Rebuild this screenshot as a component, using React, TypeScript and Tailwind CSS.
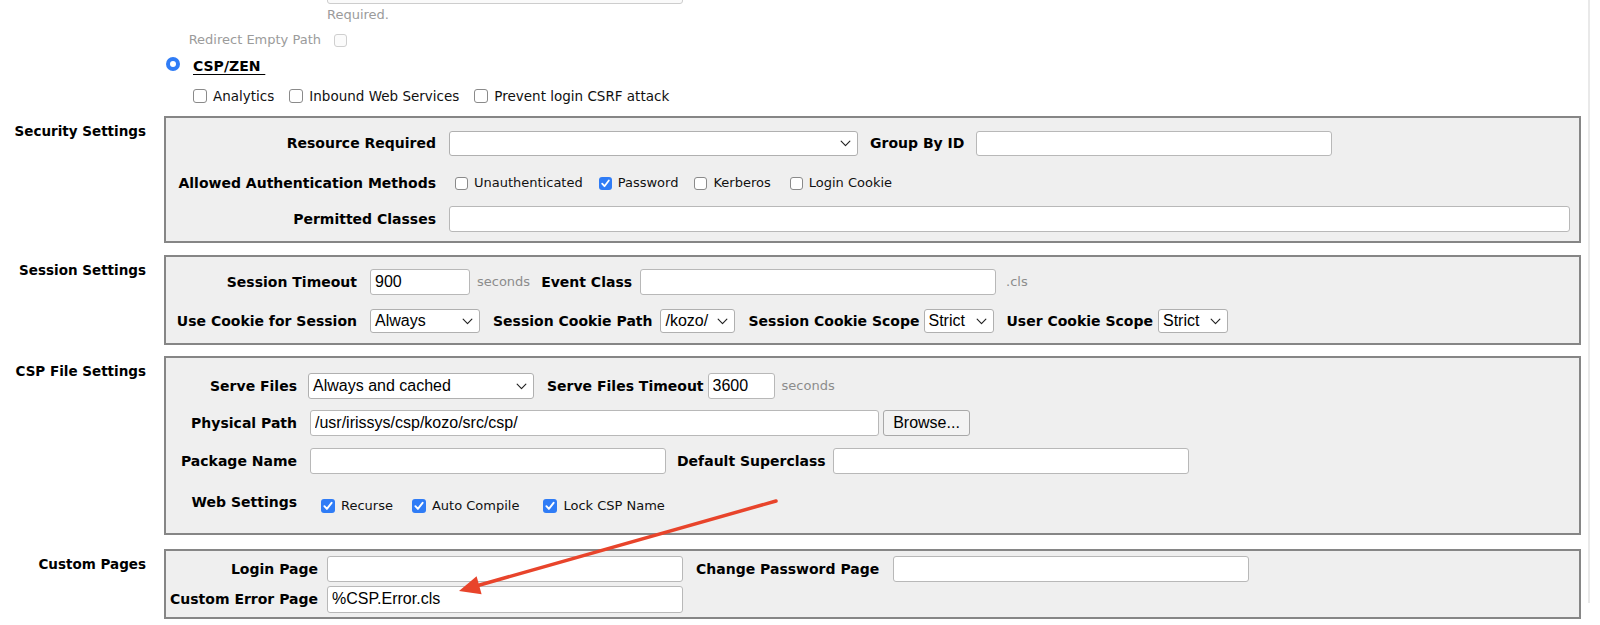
import React from "react";

const INPUT_FONT = "font-['Liberation_Sans',Arial,sans-serif]";

function Check({ checked = false, disabled = false, big = false }: { checked?: boolean; disabled?: boolean; big?: boolean }) {
  const size = big ? "w-[14px] h-[14px]" : "w-[13px] h-[13px]";
  if (checked) {
    return (
      <span className={`${size} shrink-0 rounded-[3px] bg-[#2f7cf6] flex items-center justify-center`}>
        <svg viewBox="0 0 14 14" className="w-full h-full">
          <path d="M3.4 7.2 L5.9 9.9 L10.6 3.8" fill="none" stroke="#ffffff" strokeWidth="1.9" strokeLinecap="round" strokeLinejoin="round" />
        </svg>
      </span>
    );
  }
  return (
    <span
      className={`${size} shrink-0 rounded-[3px] border ${disabled ? "border-[#cfcfcf] bg-[#fbfbfb]" : "border-[#8a8a8a] bg-white"}`}
    />
  );
}

function CheckItem({ label, checked = false, big = false, lg = false }: { label: string; checked?: boolean; big?: boolean; lg?: boolean }) {
  return (
    <span className="flex items-center gap-[6px]">
      <Check checked={checked} big={big || lg} />
      <span className={`${lg ? "text-[13.5px]" : "text-[13px]"} leading-[16px] text-[#111] whitespace-nowrap`}>{label}</span>
    </span>
  );
}

function Inp({ w, value = "", h = "h-[26px]" }: { w: string; value?: string; h?: string }) {
  return (
    <input
      readOnly
      value={value}
      className={`${w} ${h} shrink-0 border border-[#b8b8b8] rounded-[3px] bg-white px-[4px] text-[16px] ${INPUT_FONT} text-black outline-none`}
    />
  );
}

function Sel({ w, value = "", h = "h-[26px]" }: { w: string; value?: string; h?: string }) {
  return (
    <div
      className={`${w} ${h} shrink-0 flex items-center justify-between border border-[#b0b0b0] rounded-[3px] bg-white pl-[4px] pr-[6px] text-[16px] ${INPUT_FONT} text-black`}
    >
      <span className="whitespace-nowrap leading-none">{value}</span>
      <svg viewBox="0 0 12 8" className="w-[11px] h-[7px] shrink-0">
        <path d="M1 1.2 L6 6.4 L11 1.2" fill="none" stroke="#222" strokeWidth="1.3" strokeLinecap="round" strokeLinejoin="round" />
      </svg>
    </div>
  );
}

function L({ children, cls = "" }: { children: React.ReactNode; cls?: string }) {
  return <span className={`font-bold text-[14px] leading-[18px] whitespace-nowrap text-black ${cls}`}>{children}</span>;
}

function Gray({ children, cls = "" }: { children: React.ReactNode; cls?: string }) {
  return <span className={`text-[13px] text-[#8c8c8c] whitespace-nowrap ${cls}`}>{children}</span>;
}

function Section({ label, mt, children }: { label: string; mt: string; children: React.ReactNode }) {
  return (
    <div className={`flex ${mt}`}>
      <div className="w-[146px] shrink-0 text-right font-bold text-[13.5px] leading-[20px] pt-[5px] whitespace-nowrap">{label}</div>
      <div className="ml-[18px] w-[1417px] shrink-0">{children}</div>
    </div>
  );
}

export default function App() {
  return (
    <div className="relative w-[1600px] h-[625px] overflow-hidden bg-white font-['DejaVu_Sans',sans-serif] text-black">
      <div className="w-[1590px] h-full border-r-2 border-[#e9e9e9]">
        {/* Top area */}
        <div className="pl-[327px]">
          <div className="w-[356px] h-[26px] -mt-[22px] border border-[#cdcdcd] rounded-[3px] bg-[#fafafa]" />
        </div>
        <div className="pl-[327px] h-[22px] flex items-center text-[13px] text-[#9b9b9b]">Required.</div>
        <div className="h-[28px] flex items-center">
          <div className="w-[321px] text-right text-[13px] text-[#9b9b9b] whitespace-nowrap">Redirect Empty Path</div>
          <div className="ml-[13px] flex">
            <Check disabled />
          </div>
        </div>
        <div className="h-[22px] flex items-center pl-[166px] pt-[2px]">
          <span className="w-[14px] h-[14px] mb-[5px] rounded-full bg-[#2f7cf6] flex items-center justify-center shrink-0">
            <span className="w-[6px] h-[6px] rounded-full bg-white" />
          </span>
          <span className="ml-[13px] font-bold text-[14px] underline underline-offset-[3px] whitespace-pre">CSP/ZEN </span>
        </div>
        <div className="h-[38px] flex items-center pl-[193px] pt-[2px] gap-[15px]">
          <CheckItem label="Analytics" lg />
          <CheckItem label="Inbound Web Services" lg />
          <CheckItem label="Prevent login CSRF attack" lg />
        </div>

        {/* Security Settings */}
        <Section label="Security Settings" mt="mt-[2px]">
          <div className="border-2 border-[#868686] bg-[#efefef] pl-[9px] pt-[8px] pb-[9px]">
            <div className="flex items-center h-[34px]">
              <div className="w-[261px] shrink-0 text-right"><L>Resource Required</L></div>
              <div className="ml-[13px] flex"><Sel w="w-[409px]" h="h-[25px]" /></div>
              <L cls="ml-[12px]">Group By ID</L>
              <div className="ml-[12px] flex"><Inp w="w-[356px]" h="h-[25px]" /></div>
            </div>
            <div className="flex items-center h-[46px]">
              <div className="w-[261px] shrink-0 text-right"><L>Allowed Authentication Methods</L></div>
              <div className="ml-[19px] flex items-center gap-[16px]">
                <CheckItem label="Unauthenticated" />
                <CheckItem label="Password" checked />
                <CheckItem label="Kerberos" />
                <span className="ml-[3px] flex"><CheckItem label="Login Cookie" /></span>
              </div>
            </div>
            <div className="flex items-center h-[26px]">
              <div className="w-[261px] shrink-0 text-right"><L>Permitted Classes</L></div>
              <div className="ml-[13px] flex"><Inp w="w-[1121px]" /></div>
            </div>
          </div>
        </Section>

        {/* Session Settings */}
        <Section label="Session Settings" mt="mt-[12px]">
          <div className="border-2 border-[#868686] bg-[#efefef] pl-[9px] pt-[8px]">
            <div className="flex items-center h-[34px]">
              <div className="w-[182px] shrink-0 text-right"><L>Session Timeout</L></div>
              <div className="ml-[13px] flex"><Inp w="w-[100px]" value="900" /></div>
              <Gray cls="ml-[7px]">seconds</Gray>
              <L cls="ml-[11px]">Event Class</L>
              <div className="ml-[8px] flex"><Inp w="w-[356px]" /></div>
              <Gray cls="ml-[10px]">.cls</Gray>
            </div>
            <div className="flex items-center h-[44px]">
              <div className="w-[182px] shrink-0 text-right"><L>Use Cookie for Session</L></div>
              <div className="ml-[13px] flex"><Sel w="w-[110px]" h="h-[24px]" value="Always" /></div>
              <L cls="ml-[13px]">Session Cookie Path</L>
              <div className="ml-[8px] flex"><Sel w="w-[75px]" h="h-[24px]" value="/kozo/" /></div>
              <L cls="ml-[13px]">Session Cookie Scope</L>
              <div className="ml-[4px] flex"><Sel w="w-[70px]" h="h-[24px]" value="Strict" /></div>
              <L cls="ml-[13px]">User Cookie Scope</L>
              <div className="ml-[5px] flex"><Sel w="w-[70px]" h="h-[24px]" value="Strict" /></div>
            </div>
          </div>
        </Section>

        {/* CSP File Settings */}
        <Section label="CSP File Settings" mt="mt-[11px]">
          <div className="border-2 border-[#868686] bg-[#efefef] pl-[9px] pt-[10px] pb-[5px]">
            <div className="flex items-center h-[36px]">
              <div className="w-[122px] shrink-0 text-right"><L>Serve Files</L></div>
              <div className="ml-[11px] flex"><Sel w="w-[226px]" value="Always and cached" /></div>
              <L cls="ml-[13px]">Serve Files Timeout</L>
              <div className="ml-[4px] flex"><Inp w="w-[67px]" value="3600" /></div>
              <Gray cls="ml-[7px]">seconds</Gray>
            </div>
            <div className="flex items-center h-[38px]">
              <div className="w-[122px] shrink-0 text-right"><L>Physical Path</L></div>
              <div className="ml-[13px] flex"><Inp w="w-[569px]" value="/usr/irissys/csp/kozo/src/csp/" /></div>
              <button
                className={`ml-[4px] w-[87px] h-[26px] shrink-0 border border-[#a8a8a8] rounded-[3px] bg-[#f3f3f3] text-[16px] ${INPUT_FONT} text-black`}
              >
                Browse...
              </button>
            </div>
            <div className="flex items-center h-[38px]">
              <div className="w-[122px] shrink-0 text-right"><L>Package Name</L></div>
              <div className="ml-[13px] flex"><Inp w="w-[356px]" /></div>
              <L cls="ml-[11px]">Default Superclass</L>
              <div className="ml-[7px] flex"><Inp w="w-[356px]" /></div>
            </div>
            <div className="flex items-center h-[48px]">
              <div className="w-[122px] shrink-0 text-right mb-[4px]"><L>Web Settings</L></div>
              <div className="ml-[24px] mt-[4px] flex items-center gap-[19px]">
                <CheckItem label="Recurse" checked big />
                <CheckItem label="Auto Compile" checked big />
                <span className="ml-[5px] flex"><CheckItem label="Lock CSP Name" checked big /></span>
              </div>
            </div>
          </div>
        </Section>

        {/* Custom Pages */}
        <Section label="Custom Pages" mt="mt-[14px]">
          <div className="border-2 border-[#868686] bg-[#efefef] pl-[4px] pt-[2px] pb-[3px]">
            <div className="flex items-center h-[31px]">
              <div className="w-[148px] shrink-0 text-right"><L>Login Page</L></div>
              <div className="ml-[9px] flex"><Inp w="w-[356px]" /></div>
              <L cls="ml-[13px]">Change Password Page</L>
              <div className="ml-[14px] flex"><Inp w="w-[356px]" /></div>
            </div>
            <div className="flex items-center h-[30px]">
              <div className="w-[148px] shrink-0 text-right"><L>Custom Error Page</L></div>
              <div className="ml-[9px] flex"><Inp w="w-[356px]" h="h-[27px]" value="%CSP.Error.cls" /></div>
            </div>
          </div>
        </Section>
      </div>

      {/* Red annotation arrow */}
      <svg className="absolute left-0 top-0 pointer-events-none" width="1600" height="625" viewBox="0 0 1600 625">
        <line x1="776" y1="501" x2="478" y2="585.5" stroke="#e8442b" strokeWidth="3.5" strokeLinecap="round" />
        <polygon points="459,591 481.6,594.2 476.6,576.3" fill="#e8442b" />
      </svg>
    </div>
  );
}
